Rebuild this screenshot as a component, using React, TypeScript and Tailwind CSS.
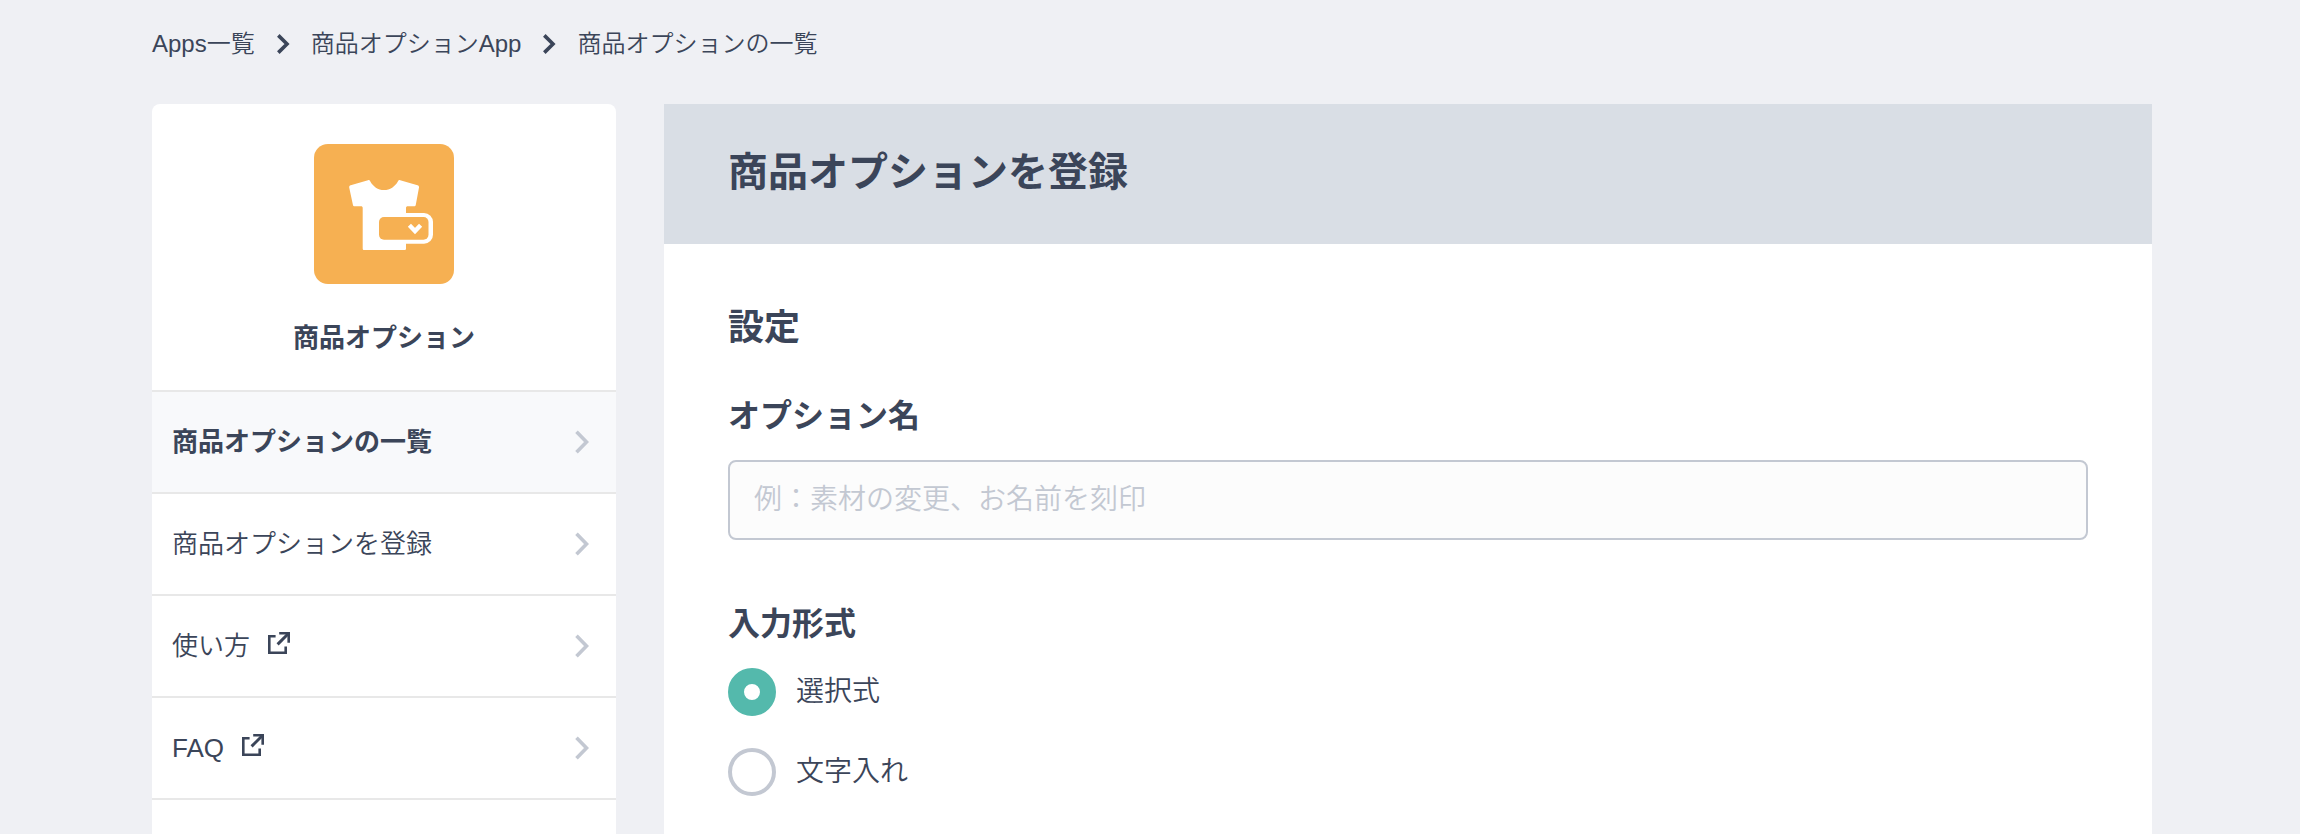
import { useState } from "react";

const menuItems = [
  { label: "商品オプションの一覧", href: "#options", active: true, external: false },
  { label: "商品オプションを登録", href: "#new", active: false, external: false },
  { label: "使い方", href: "#guide", active: false, external: true },
  { label: "FAQ", href: "#faq", active: false, external: true },
];

const inputTypes = [
  { value: "select", label: "選択式" },
  { value: "text", label: "文字入れ" },
];

function BreadcrumbArrow() {
  return (
    <svg width={16} height={22} viewBox="0 0 16 22" fill="none" stroke="currentColor" strokeWidth="3.6" aria-hidden="true">
      <path d="M3.3 2.4 12 11 3.3 19.6" />
    </svg>
  );
}

function MenuArrow() {
  return (
    <svg width={14} height={24} viewBox="0 0 14 24" fill="none" stroke="#c3c8d2" strokeWidth="3.6" aria-hidden="true">
      <path d="M1.5 1.7 11.5 12 1.5 22.3" />
    </svg>
  );
}

function ExternalIcon() {
  return (
    <svg className="mb-1.5" width={22} height={22} viewBox="0 0 22 22" fill="none" stroke="currentColor" strokeWidth="2.6" aria-hidden="true">
      <path d="M7.6 4.3H1.3v16.4h16.4v-6.2" />
      <path d="M11.2 1.3h9.5v9.5" />
      <path d="M20.2 1.8 9.6 12.4" strokeWidth="3" />
    </svg>
  );
}

function AppIcon() {
  return (
    <svg width={140} height={140} viewBox="0 0 140 140" aria-hidden="true">
      <rect width="140" height="140" rx="14" fill="#f6b052" />
      <path
        d="M54 36.2c1-.3 1.7 0 2.2 1C59 42.5 64 46 70 46s11.2-3.5 14-8.800c.5-1 1.200-1.300 2.200-1l17.300 5c1.200.4 1.700 1.200 1.500 2.400l-3.200 17.200c-.2 1-.8 1.500-1.800 1.500h-6.200c-1.200 0-1.800.6-1.800 1.800V104.500c0 1-.6 1.500-1.500 1.500h-40.300c-1 0-1.500-.5-1.500-1.500V64.100c0-1.200-.6-1.800-1.800-1.800h-6.200c-1 0-1.600-.5-1.800-1.500L35.200 43.600c-.2-1.200.3-2 1.500-2.400z"
        fill="#fff"
      />
      <path d="M88 69h22a9 9 0 0 1 9 9v12.700a9 9 0 0 1-9 9H88z" fill="#fff" />
      <rect x="65" y="73" width="49.5" height="22.7" rx="5" fill="#f6b052" />
      <path d="M95.4 81.3 101 87l5.600-5.700" fill="none" stroke="#fff" strokeWidth="4.4" />
    </svg>
  );
}

export default function App() {
  const [optionName, setOptionName] = useState("");
  const [inputType, setInputType] = useState("select");

  return (
    <div className="min-h-screen flex flex-col bg-[#eff0f4] pl-[152px] pr-[148px] text-[#3b4559] font-['Liberation_Sans','Noto_Sans_CJK_JP',sans-serif]">
      <nav aria-label="breadcrumb" className="flex items-center gap-5 pt-[26px] pb-[42px] text-2xl leading-9 font-[350]">
        <a href="#apps">Apps一覧</a>
        <BreadcrumbArrow />
        <a href="#app">商品オプションApp</a>
        <BreadcrumbArrow />
        <a href="#options">商品オプションの一覧</a>
      </nav>

      <div className="flex flex-1 gap-12">
        <aside className="w-[464px] shrink-0 bg-white rounded-t-lg">
          <div className="flex flex-col items-center gap-[34px] pt-10 pb-8">
            <AppIcon />
            <p className="text-[26px] leading-10 font-bold">商品オプション</p>
          </div>
          <ul className="border-b-2 border-[#e8e8e8]">
            {menuItems.map((item) => (
              <li key={item.label} className="border-t-2 border-[#e8e8e8]">
                <a
                  href={item.href}
                  className={`flex items-center justify-between pl-5 pr-[27px] py-[30px] text-[26px] leading-10 ${
                    item.active ? "bg-[#f8f9fb] font-bold" : "font-[350]"
                  }`}
                >
                  <span className="flex items-center gap-[18px]">
                    {item.label}
                    {item.external && <ExternalIcon />}
                  </span>
                  <MenuArrow />
                </a>
              </li>
            ))}
          </ul>
        </aside>

        <main className="flex-1 bg-white">
          <header className="bg-[#d9dee5] px-16 pt-[38px] pb-[42px]">
            <h1 className="text-[40px] leading-[60px] font-bold">商品オプションを登録</h1>
          </header>

          <form className="px-16 pt-14">
            <h2 className="text-4xl leading-[56px] font-bold">設定</h2>

            <label htmlFor="optionName" className="block mt-9 text-[32px] leading-[48px] font-bold">
              オプション名
            </label>
            <input
              id="optionName"
              type="text"
              value={optionName}
              onChange={(e) => setOptionName(e.target.value)}
              placeholder="例：素材の変更、お名前を刻印"
              className="w-full h-20 mt-5 px-6 text-[28px] font-[350] bg-[#fcfcfc] border-2 border-[#c3c8d2] rounded-lg placeholder:text-[#c3c8d2] focus:outline-none focus:border-[#54b9ac]"
            />

            <fieldset className="mt-[60px]">
              <legend className="text-[32px] leading-[48px] font-bold">入力形式</legend>
              <div className="flex flex-col items-start gap-8 mt-5">
                {inputTypes.map((type) => (
                  <label key={type.value} className="flex items-center gap-5 text-[28px] leading-[48px] font-[350] cursor-pointer">
                    <input
                      type="radio"
                      name="inputType"
                      value={type.value}
                      checked={inputType === type.value}
                      onChange={() => setInputType(type.value)}
                      className="appearance-none size-12 rounded-full border-4 border-[#c3c8d2] bg-white checked:border-16 checked:border-[#54b9ac]"
                    />
                    {type.label}
                  </label>
                ))}
              </div>
            </fieldset>
          </form>
        </main>
      </div>
    </div>
  );
}
